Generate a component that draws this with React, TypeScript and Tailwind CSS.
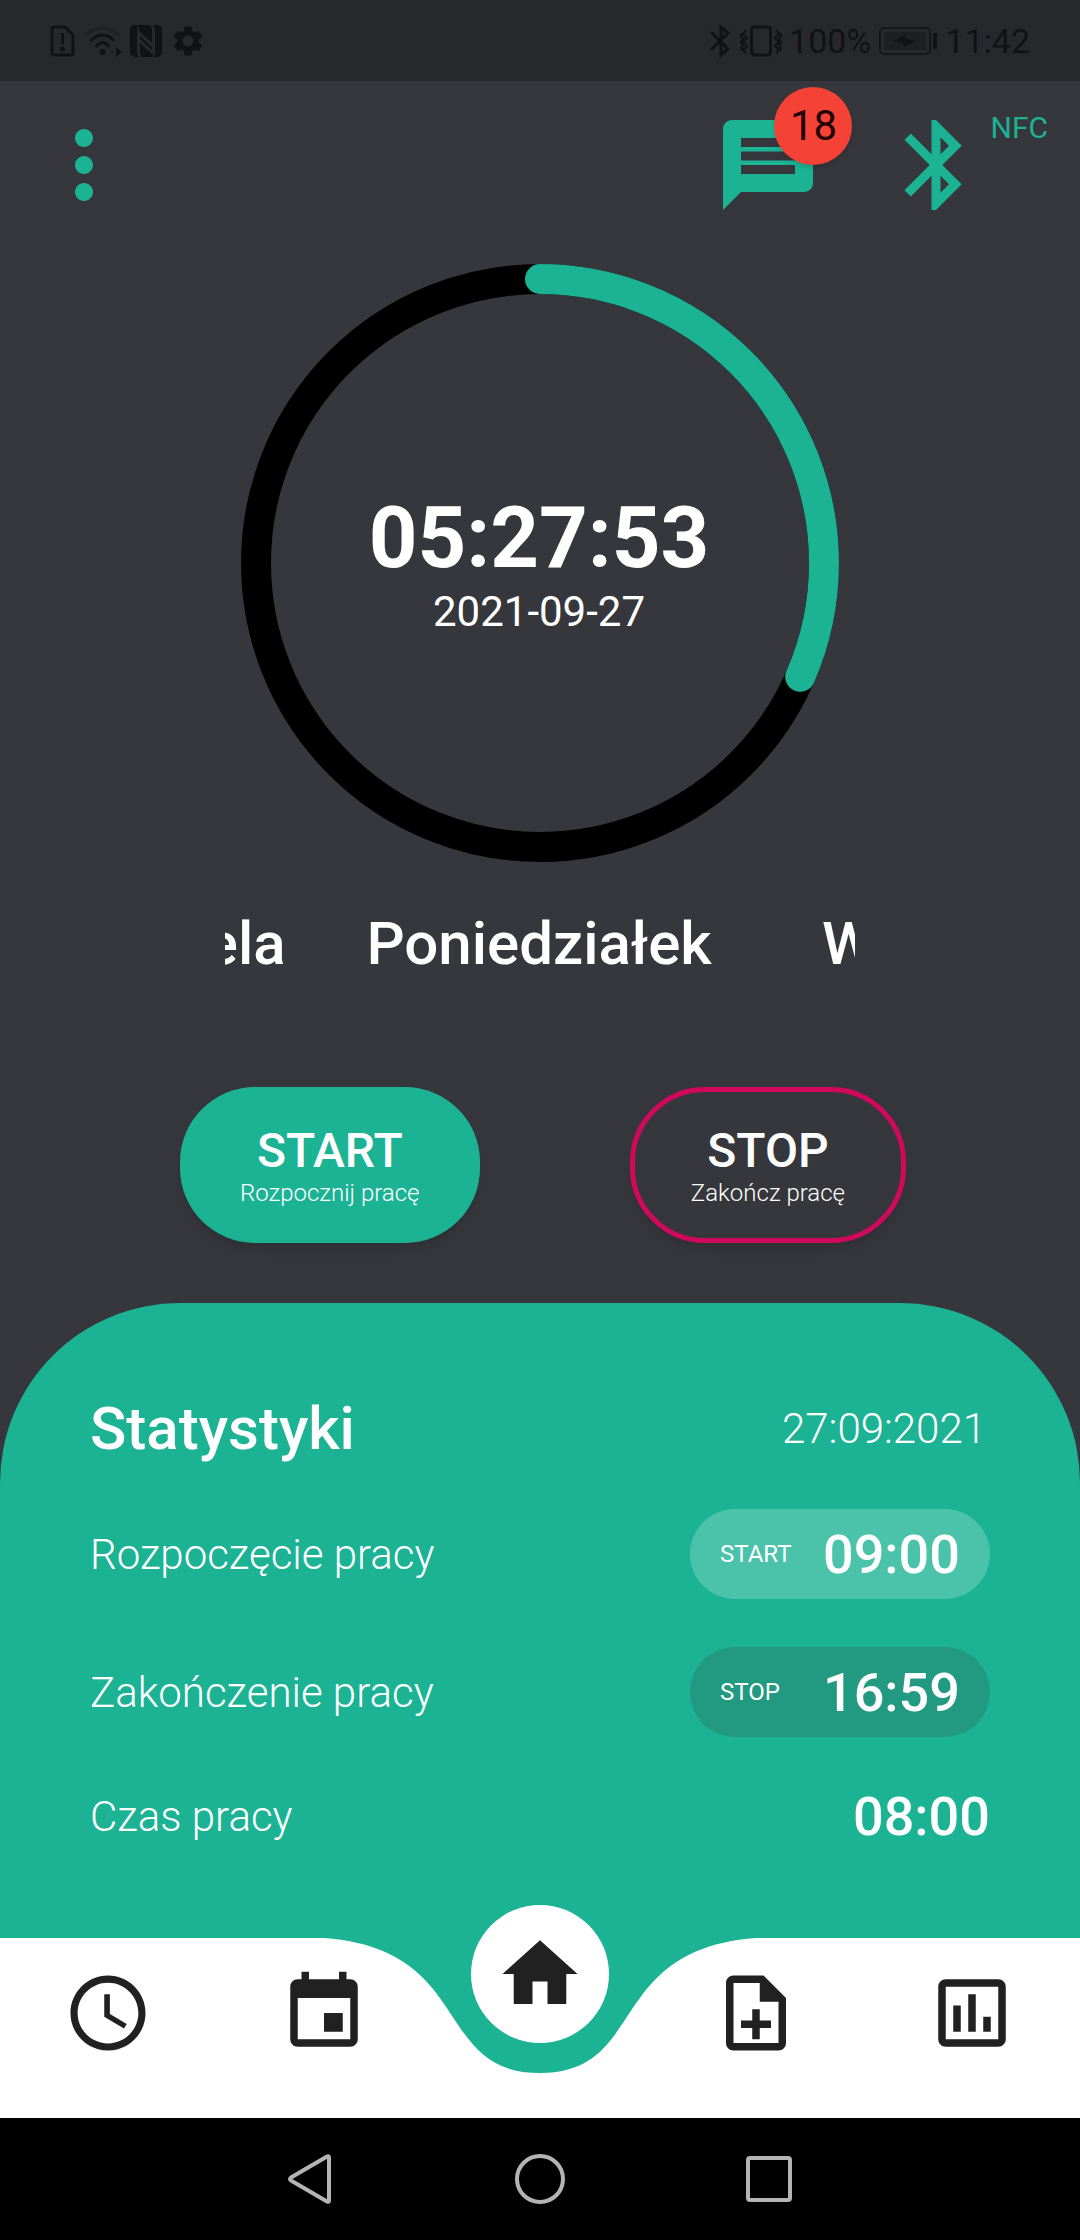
import React from "react";
import {
  MdBluetooth,
  MdMessage,
  MdMoreVert,
  MdSettings,
} from "react-icons/md";

const RING_RADIUS = 284;
const RING_LENGTH = 2 * Math.PI * RING_RADIUS;
const RING_PROGRESS = 0.3155;

const days = ["Niedziela", "Poniedziałek", "Wtorek"];

const tabs = [
  {
    label: "Czas",
    path: "M11.99 2C6.47 2 2 6.48 2 12s4.47 10 9.99 10C17.52 22 22 17.52 22 12S17.52 2 11.99 2zM12 20.1c-4.47 0-8.1-3.63-8.1-8.1S7.53 3.9 12 3.9s8.1 3.63 8.1 8.1-3.63 8.1-8.1 8.1zM12.5 7H11v6l5.25 3.15.75-1.23-4.5-2.67z",
  },
  {
    label: "Kalendarz",
    path: "M17 12h-5v5h5v-5zM16 1v2H8V1H6v2H5c-1.11 0-1.99.9-1.99 2L3 19c0 1.1.89 2 2 2h14c1.1 0 2-.9 2-2V5c0-1.1-.9-2-2-2h-1V1h-2zm3 18H5V8h14v11z",
  },
  {
    label: "Start",
    path: "M10 20v-6h4v6h5v-8h3L12 3 2 12h3v8z",
    active: true,
  },
  {
    label: "Dodaj",
    path: "M13 11h-2v3H8v2h3v3h2v-3h3v-2h-3v-3zm1-9H6c-1.1 0-2 .9-2 2v16c0 1.1.89 2 1.99 2H18c1.1 0 2-.9 2-2V8l-6-6zm4 18H6V4h7v5h5v11z",
  },
  {
    label: "Raporty",
    path: "M9 17H7v-7h2v7zm4 0h-2V7h2v10zm4 0h-2v-4h2v4zm2 2H5V5h14v14zm0-16H5c-1.1 0-2 .9-2 2v14c0 1.1.9 2 2 2h14c1.1 0 2-.9 2-2V5c0-1.1-.9-2-2-2z",
  },
];

function StatusBar() {
  return (
    <div className="flex h-[81px] items-center justify-between bg-[#27282c] pl-12 pr-[50px] text-[#111215]">
      <div className="flex items-center gap-2">
        <svg className="h-[34px] w-7" viewBox="0 0 28 34" fill="none">
          <path
            d="M6 3h11l8 8v18q0 2-2 2H6q-2 0-2-2V5q0-2 2-2z"
            stroke="currentColor"
            strokeWidth="3"
          />
          <path d="M13 9h3v11h-3z" fill="currentColor" />
          <circle cx="14.500" cy="25" r="2.500" fill="currentColor" />
        </svg>
        <svg
          className="h-[34px] w-[38px]"
          viewBox="0 0 38 34"
          fill="none"
          stroke="currentColor"
          strokeWidth="3"
          strokeLinecap="round"
        >
          <path d="M3 10Q18.500-2 34 10" stroke="#1f2024" />
          <path d="M7.500 16Q18.500 6 29.500 16M12.500 22Q18.500 15 24.500 22" />
          <circle cx="18.500" cy="28" r="3" fill="currentColor" stroke="none" />
          <path d="M32 23l6 5-6 5z" fill="currentColor" stroke="none" />
          <path d="M30 24l-4 4 4 4z" fill="#202125" stroke="none" />
        </svg>
        <svg className="h-[34px] w-8" viewBox="0 0 32 34" fill="none">
          <rect y="1" width="32" height="32" rx="5" fill="currentColor" />
          <path d="M7 1l3 7v18q0 5 2 7H9q-2-2-2-6z" fill="#27282c" />
          <path d="M25 33l-3-7V8q0-5-2-7h3q2 2 2 6z" fill="#27282c" />
          <path d="M10 8l12 11v4L10 12zM10 15l12 11 2 6L10 19z" fill="#27282c" />
        </svg>
        <MdSettings className="h-9 w-9" />
      </div>
      <div className="flex items-center gap-1.5 text-[34px] leading-10">
        <svg
          className="h-[34px] w-6"
          viewBox="0 0 24 34"
          fill="none"
          stroke="currentColor"
          strokeWidth="3"
        >
          <path d="M2 8l17 17-7 6V3l7 6L2 26" />
        </svg>
        <svg
          className="h-[34px] w-11"
          viewBox="0 0 44 34"
          fill="none"
          stroke="currentColor"
          strokeWidth="3"
        >
          <rect x="12.500" y="3" width="19" height="28" rx="3" />
          <path
            d="M7 6l-3 4 4 4-4 4 4 4-4 4 3 3M3 9l-1 3 2 3-2 3 2 3-2 3 1 3"
            strokeWidth="2"
          />
          <path
            d="M37 6l3 4-4 4 4 4-4 4 4 4-3 3M41 9l1 3-2 3 2 3-2 3 2 3-1 3"
            strokeWidth="2"
          />
        </svg>
        <span className="mr-0.5">100%</span>
        <svg className="h-[34px] w-[60px]" viewBox="0 0 60 34">
          <rect
            x="1"
            y="4"
            width="50"
            height="26"
            rx="4"
            fill="none"
            stroke="currentColor"
            strokeWidth="1.500"
          />
          <rect x="5" y="8" width="42" height="18" fill="#1e1f22" />
          <path d="M14 17l12-6 1 4 10 2-12 6-1-4z" fill="currentColor" />
          <rect x="54" y="9" width="4" height="16" rx="1" fill="currentColor" />
        </svg>
        <span>11:42</span>
      </div>
    </div>
  );
}

function Header() {
  return (
    <header className="flex justify-between pl-[30px] pr-8 pt-[30px] text-[#1bb394]">
      <button aria-label="Menu">
        <MdMoreVert className="h-[108px] w-[108px]" />
      </button>
      <div className="flex items-start">
        <button aria-label="Wiadomości" className="relative mr-[60px]">
          <MdMessage className="h-[108px] w-[108px]" />
          <span className="absolute -right-[30px] -top-6 flex h-[78px] w-[78px] items-center justify-center rounded-full bg-[#f44336] text-[42px] leading-none text-[#210202] shadow-md">
            18
          </span>
        </button>
        <button aria-label="Bluetooth">
          <MdBluetooth className="h-[108px] w-[108px]" />
        </button>
        <span className="text-[30px] leading-[34px]">NFC</span>
      </div>
    </header>
  );
}

function Timer() {
  return (
    <div className="mx-auto mt-[45px] grid h-[598px] w-[598px] place-items-center">
      <svg
        className="col-start-1 row-start-1 h-full w-full -rotate-90"
        viewBox="0 0 598 598"
        fill="none"
        strokeWidth="30"
      >
        <circle cx="299" cy="299" r={RING_RADIUS} stroke="#000" />
        <circle
          cx="299"
          cy="299"
          r={RING_RADIUS}
          stroke="#1bb394"
          strokeLinecap="round"
          strokeDasharray={`${RING_LENGTH * RING_PROGRESS} ${RING_LENGTH}`}
        />
      </svg>
      <div className="col-start-1 row-start-1 pb-0.5 pr-0.5 text-center">
        <div className="text-[85px] font-bold leading-[98px]">05:27:53</div>
        <div className="text-[42px] leading-[49px]">2021-09-27</div>
      </div>
    </div>
  );
}

function Stats() {
  return (
    <section className="rounded-t-[180px] bg-[#1bb394] px-[90px] py-[90px]">
      <div className="mb-11 flex h-[72px] items-center justify-between">
        <h2 className="text-[60px] font-medium leading-[72px]">Statystyki</h2>
        <span className="pb-0.5 pr-1 text-[42px] font-light leading-[49px]">27:09:2021</span>
      </div>
      <dl className="flex flex-col gap-12">
        <div className="flex items-center justify-between">
          <dt className="text-[42px] font-light leading-[49px]">Rozpoczęcie pracy</dt>
          <dd className="flex h-[90px] w-[300px] items-center justify-between rounded-full bg-[#4bc3aa] px-[30px]">
            <span className="text-2xl">START</span>
            <span className="text-[54px] font-medium leading-[63px]">09:00</span>
          </dd>
        </div>
        <div className="flex items-center justify-between">
          <dt className="text-[42px] font-light leading-[49px]">Zakończenie pracy</dt>
          <dd className="flex h-[90px] w-[300px] items-center justify-between rounded-full bg-[#229a82] px-[30px]">
            <span className="text-2xl">STOP</span>
            <span className="text-[54px] font-medium leading-[63px]">16:59</span>
          </dd>
        </div>
        <div className="flex items-center justify-between">
          <dt className="text-[42px] font-light leading-[49px]">Czas pracy</dt>
          <dd className="text-[54px] font-medium leading-[63px]">08:00</dd>
        </div>
      </dl>
    </section>
  );
}

function TabBar() {
  return (
    <nav className="relative h-[180px] bg-white text-[#212121]">
      {/* notch under the active tab */}
      <svg
        className="absolute left-1/2 top-0 h-[135px] w-[432px] -translate-x-1/2"
        viewBox="0 0 432 135"
      >
        <path
          d="M0 0C151.200 11.250 108 135 216 135C324 135 280.800 11.250 432 0z"
          fill="#1bb394"
        />
      </svg>
      <div className="relative grid h-[150px] grid-cols-5 items-center">
        {tabs.map((tab) => (
          <a
            key={tab.label}
            href="#"
            aria-label={tab.label}
            className={
              tab.active
                ? "flex h-[138px] w-[138px] -translate-y-[39px] items-center justify-center justify-self-center rounded-full bg-white"
                : "justify-self-center"
            }
          >
            <svg className="h-[90px] w-[90px]" viewBox="0 0 24 24" fill="currentColor">
              <path d={tab.path} />
            </svg>
          </a>
        ))}
      </div>
    </nav>
  );
}

function SystemBar() {
  return (
    <div className="flex min-h-[122px] grow items-center justify-center gap-[175px] bg-black text-[#b4b4b4]">
      <button aria-label="Wstecz">
        <svg
          className="h-[54px] w-[54px]"
          viewBox="0 0 54 54"
          fill="none"
          stroke="currentColor"
          strokeWidth="4"
          strokeLinejoin="round"
        >
          <path d="M43 4.500q2-1 2 1v43q0 2-2 1L7 28.500q-2-1.500 0-3z" />
        </svg>
      </button>
      <button aria-label="Ekran główny">
        <svg className="h-[54px] w-[54px]" viewBox="0 0 54 54" fill="none">
          <circle cx="27" cy="27" r="23" stroke="currentColor" strokeWidth="4" />
        </svg>
      </button>
      <button aria-label="Ostatnie">
        <svg className="h-[54px] w-[54px]" viewBox="0 0 54 54" fill="none">
          <rect
            x="6"
            y="6"
            width="42"
            height="42"
            rx="2"
            stroke="currentColor"
            strokeWidth="4"
          />
        </svg>
      </button>
    </div>
  );
}

export default function App() {
  return (
    <div className="flex min-h-screen flex-col bg-[#36373c] font-['Roboto',sans-serif] text-white">
      <StatusBar />
      <Header />
      <main>
        <Timer />
        <div className="mx-auto mt-[46px] flex w-[630px] justify-center overflow-hidden">
          {days.map((day) => (
            <div
              key={day}
              className="w-3/5 shrink-0 pr-0.5 text-center text-[60px] font-medium leading-[72px]"
            >
              {day}
            </div>
          ))}
        </div>
        <div className="mb-[60px] mt-[107px] flex justify-between pl-[180px] pr-[174px]">
          <button className="h-[156px] rounded-[75px] bg-[#1bb394] px-[60px] shadow-lg">
            <span className="block text-5xl font-medium leading-[56px]">START</span>
            <span className="block text-2xl font-light leading-7">Rozpocznij pracę</span>
          </button>
          <button className="h-[156px] rounded-[75px] border-5 border-[#d1095d] bg-[#36373c] px-14 shadow-lg">
            <span className="block text-5xl font-medium leading-[56px]">STOP</span>
            <span className="block text-2xl font-light leading-7">Zakończ pracę</span>
          </button>
        </div>
        <Stats />
      </main>
      <TabBar />
      <SystemBar />
    </div>
  );
}
